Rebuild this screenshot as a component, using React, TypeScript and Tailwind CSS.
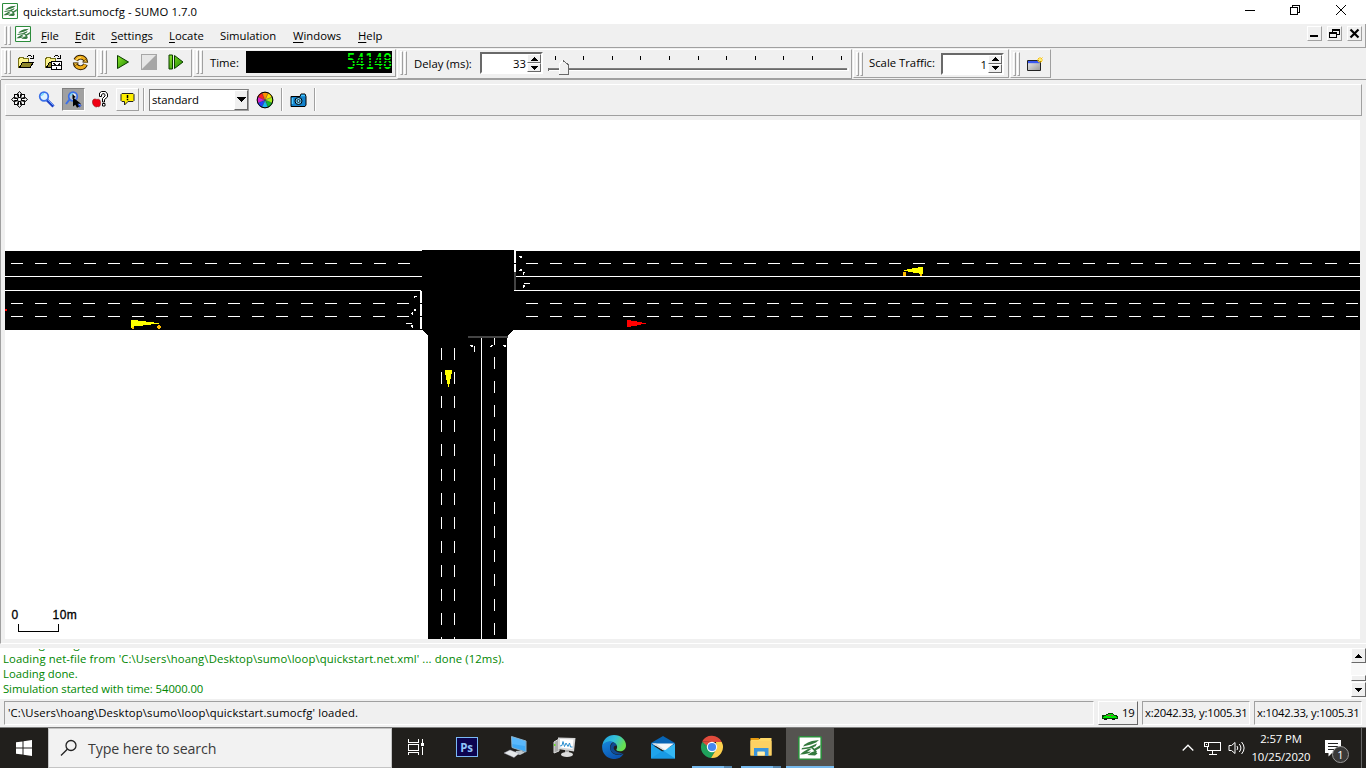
import React from "react";

type Kids = { children?: React.ReactNode; className?: string };

const raised = "border border-t-white border-l-white border-r-[#a0a0a0] border-b-[#a0a0a0]";
const sunken = "border border-t-[#a0a0a0] border-l-[#a0a0a0] border-r-white border-b-white";
const well = "border-2 border-t-[#696969] border-l-[#696969] border-r-white border-b-white bg-white";

function Svg({ w, h, children, className = "", crisp = false }: Kids & { w: number; h: number; crisp?: boolean }) {
  return (
    <svg width={w} height={h} viewBox={`0 0 ${w} ${h}`} fill="none" shapeRendering={crisp ? "crispEdges" : "auto"} className={`shrink-0 ${className}`}>
      {children}
    </svg>
  );
}

function SumoLogo({ size }: { size: number }) {
  return (
    <svg width={size} height={size} viewBox="0 0 24 24" className="shrink-0">
      <rect x="0.8" y="0.8" width="22.4" height="22.4" rx="1" fill="#fff" stroke="#2c8c3c" strokeWidth="1.6" />
      <g fill="#34793e">
        <path d="M10 6.500l4-1.500 7-1-3 2.500-5 2-8 2 1.500-2z" />
        <path d="M4 12l7-1 8-3.500-1.500 2.800-6 2.200-8 1z" />
        <path d="M16 13l6.500-4-.5 3-5.500 3z" />
        <path d="M2 18.500l3-2.500 5-3 4-.5-5 3.500 4-.5-2 1.700-5 1z" />
        <path d="M9.500 19l3.500-2.500 4-1.500 2.500 2.500L17 19.500z" />
        <path d="M12.500 11l1.500-.8 5 5.300-1.500 1z" />
      </g>
    </svg>
  );
}

function Grip({ className = "h-[24px]" }: { className?: string }) {
  return (
    <div className={`flex shrink-0 gap-[1px] ${className}`}>
      <i className="w-[3px] border border-t-white border-l-white border-r-[#a0a0a0] border-b-[#a0a0a0]" />
      <i className="w-[3px] border border-t-white border-l-white border-r-[#a0a0a0] border-b-[#a0a0a0]" />
    </div>
  );
}

function Arrow({ up = false }: { up?: boolean }) {
  return (
    <Svg w={7} h={4} crisp>
      <path fill="#000" d={up ? "M3 0h1v1h1v1h1v1h1v1H0V3h1V2h1V1h1z" : "M0 0h7v1H6v1H5v1H4v1H3V3H2V2H1V1H0z"} />
    </Svg>
  );
}

function SpinButtons() {
  return (
    <div className="flex w-[14px] flex-col">
      {[true, false].map((up) => (
        <div key={String(up)} className="flex flex-1 items-center justify-center border border-t-white border-l-white border-r-[#696969] border-b-[#696969] bg-[#f0f0f0]">
          <Arrow up={up} />
        </div>
      ))}
    </div>
  );
}

function Folder({ config = false }: { config?: boolean }) {
  return (
    <Svg w={17} h={16} crisp>
      <path d="M0.500 13.500V4.500h1v-1h4v1h5v3" fill="#fff68a" stroke="#77711a" />
      <path d="M1 13V5h9v3H4z" fill="#fbf38b" />
      <path d="M1.500 13.500l3-5h11l-3.500 5z" fill="#8d8528" stroke="#000" />
      <path d="M9 2.500h1M10 1.500h3M13 2.500h1M15.500 1v4M12 4.500h3" stroke="#000" />
      {config && (
        <>
          <rect x="6.500" y="7.500" width="10" height="8" fill="#fff" stroke="#000" />
          <path d="M7 11.500h3M13 11.500h3M11.500 13v2M8 9h1v1h1v1h3v-1h1V9h1" stroke="#111" />
        </>
      )}
    </Svg>
  );
}

function Reload() {
  return (
    <Svg w={17} h={17}>
      <circle cx="8.500" cy="8.500" r="5.300" stroke="#2b1a00" strokeWidth="4.800" strokeDasharray="14 2.650" strokeDashoffset="-2" />
      <circle cx="8.500" cy="8.500" r="5.300" stroke="#efae1b" strokeWidth="3" strokeDasharray="13.500 3.150" strokeDashoffset="-2.300" />
      <path d="M10.500 8h5.500L13.500 5.500zM6.500 9H1l2.500 2.500z" fill="#f7c53a" stroke="#2b1a00" strokeWidth=".6" />
      <path d="M4 6.500a5 5 0 0 1 5-3" stroke="#ffe173" />
    </Svg>
  );
}

const Green = () => (
  <defs>
    <linearGradient id="go" x1="0" y1="0" x2="1" y2="1">
      <stop offset="0" stopColor="#8ee62c" />
      <stop offset="1" stopColor="#1d8a00" />
    </linearGradient>
  </defs>
);

function Move() {
  return (
    <Svg w={17} h={17}>
      <g fill="#fff" stroke="#000">
        {[45, 135, 225, 315].map((a) => (
          <path key={a} transform={`rotate(${a} 8.500 8.500)`} d="M8.500 1.500L10.500 3.500 9 6.500H8L6.500 3.500z" />
        ))}
        {[0, 90, 180, 270].map((a) => (
          <path key={a} transform={`rotate(${a} 8.500 8.500)`} d="M8.500 .5L11 3.300H9.500V6.500h-2V3.300H6z" />
        ))}
      </g>
      <rect x="7.500" y="7.500" width="2" height="2" fill="#fff" />
    </Svg>
  );
}

function Lens({ picked = false }: { picked?: boolean }) {
  return (
    <Svg w={17} h={17}>
      <path d="M9 9l6.500 6.500" stroke="#1c3fc4" strokeWidth="3" />
      <path d="M9.500 8.500l6 6" stroke="#6ba4ff" />
      {picked && <path d="M4.500 8.500L1 13" stroke="#3a6fe8" strokeWidth="2" />}
      <circle cx={picked ? 8 : 6} cy="5.500" r="4.300" fill={picked ? "#b8c2d4" : "#dff2ff"} stroke="#3a6fe8" strokeWidth="1.700" />
      <path d={picked ? "M5.500 5a3 3 0 0 1 2.500-2.500" : "M3.500 5a3 3 0 0 1 2.500-2.500"} stroke="#65d8ff" strokeWidth="1.300" />
      {picked && (
        <>
          <path d="M7.500 3v5l3-2z" fill="#000" /><path d="M8 2l3 2-1 1z" fill="#fff" />
          <path d="M8 6.500v9l2.300-1.800 1.700 3 2-1-1.600-3H16z" fill="#000" />
        </>
      )}
    </Svg>
  );
}

function Scene() {
  const bits: number[][] = [
    [414, 296, 3, 1], [414, 297, 1, 1], [414, 309, 2, 2], [411, 313, 2, 1], [412, 312, 1, 3], [406, 323, 6, 1], [411, 325, 2, 2], [412, 327, 1, 1],
    [519, 256, 3, 1], [520, 257, 2, 1], [519, 270, 2, 1], [520, 269, 2, 2], [523, 272, 2, 1], [523, 273, 1, 2], [524, 283, 6, 1], [523, 285, 2, 2], [523, 287, 1, 1],
    [470, 345, 3, 1], [471, 346, 2, 1], [474, 346, 1, 6], [491, 345, 2, 1], [490, 346, 2, 1], [504, 345, 2, 1], [503, 345, 1, 1], [504, 346, 2, 1],
  ];
  return (
    <svg width="1355" height="519" viewBox="5 120 1355 519" shapeRendering="crispEdges" className="block">
      <path d="M5 251H422V250H514V251H1360V330H513L507 336V639H428V336L422 330H5z" fill="#000" />
      <g stroke="#fff" fill="none">
        <path d="M5 276.500H422M5 290.500H421M516 276.500H1360M514 290.500H1360M481.500 338V639" />
        <path d="M11 263.500H412" strokeDasharray="12 12.190" />
        <path d="M11 303.500H412M11 316.500H412" strokeDasharray="12 12.130" />
        <path d="M526 263.500H1360" strokeDasharray="12 12.200" />
        <path d="M526 303.500H1360M526 316.500H1360" strokeDasharray="12 12.130" />
        <path d="M441.500 348V639M454.500 348V639" strokeDasharray="12 12.100" />
        <path d="M494.500 357V639" strokeDasharray="12 12.150" />
        <path d="M494.500 336V345" />
      </g>
      <path d="M420 291h2v12h-2zM420 304h2v12h-2zM420 317h2v12h-2zM514 250h2v13h-2zM514 264h2v8h-2z" fill="#fff" />
      <path d="M514 272h2v18h-2zM468 336h40v2h-40z" fill="#444" />
      <g fill="#fff">{bits.map(([x, y, w, h], i) => <rect key={i} x={x} y={y} width={w} height={h} />)}</g>
      <path d="M131 320h7v1h8v1h8v1h5v1h-8v1h-8v1h-9v2h-3z" fill="#ff0" />
      <path d="M132 327h2v2h-2zM157 326h4v2h-4zM158 325h2v4h-2zM903 272h3v4h-3zM920 274h2v2h-2z" fill="#fb0" />
      <path d="M923 267h-5v1h-6v1h-5v1h-3v1h4v1h5v1h6v1h4z" fill="#ff0" />
      <path d="M627 320h4v1h6v1h5v1h4v1h-5v1h-4v1h-6v1h-4z" fill="#f00" />
      <path d="M445 370h7v4h-1v5h-1v5h-1v3h-1v-3h-1v-4h-1v-5h-1z" fill="#ff0" />
      <rect x="5" y="309" width="2" height="2" fill="#f00" />
      <path d="M18.500 624V631.500H58.500V624" stroke="#000" fill="none" />
      <g fontFamily="Liberation Sans, sans-serif" fontSize="12" fill="#000" stroke="#000" strokeWidth=".3" letterSpacing=".5">
        <text x="11.500" y="619">0</text>
        <text x="52.500" y="619">10m</text>
      </g>
    </svg>
  );
}

const menus: [string, string, string][] = [
  ["F", "ile", "w-[34px]"],
  ["E", "dit", "w-[36px]"],
  ["S", "ettings", "w-[58px]"],
  ["L", "ocate", "w-[51px]"],
  ["", "Simulation", "w-[73px]"],
  ["W", "indows", "w-[65px]"],
  ["H", "elp", "w-[40px]"],
];

function TitleBar() {
  return (
    <div className="flex h-[24px] items-center bg-white pb-[2px] pl-[2px]">
      <SumoLogo size={16} />
      <span className="ml-[5px] text-[11.3px] tracking-[0.09px]">quickstart.sumocfg - SUMO 1.7.0</span>
      <div className="ml-auto flex w-[121px] items-center pb-[2px]">
        <Svg w={10} h={10} crisp><path d="M0 5.500h10" stroke="#000" /></Svg>
        <Svg w={10} h={10} crisp className="ml-[35px]"><path d="M.5 2.500h7v7h-7zM2.500 2V.5h7v7H8" stroke="#000" /></Svg>
        <Svg w={10} h={10} className="ml-[36px]"><path d="M0 0l10 10M10 0L0 10" stroke="#000" /></Svg>
      </div>
    </div>
  );
}

function MenuBar() {
  return (
    <div className="ml-[1px] flex h-[24px] w-[1365px] border-b border-b-[#a0a0a0] border-r border-r-[#a0a0a0] pl-[3px]">
      <Grip className="mt-[2px] h-[19px]" />
      <div className="mt-[2px] ml-[4px]"><SumoLogo size={16} /></div>
      <div className="ml-[10px] flex pt-[4px]">
        {menus.map(([key, rest, width]) => (
          <span key={rest} className={`${width} leading-[15px]`}>
            <u className="underline-offset-2">{key}</u>{rest}
          </span>
        ))}
      </div>
      <div className="mt-[2px] mr-[3px] ml-auto flex gap-[5px]">
        <div className={`size-[15px] ${raised}`}><Svg w={13} h={13} crisp><path d="M2 8h8v2H2z" fill="#000" /></Svg></div>
        <div className={`size-[15px] ${raised}`}><Svg w={13} h={13} crisp><path d="M4.500 5V2.500h7v5H9M4 3h8M1.500 5.500h7v5h-7zM1 6.500h8" stroke="#000" /></Svg></div>
        <div className={`size-[15px] ${raised}`}><Svg w={13} h={13}><path d="M2.500 2.500l8 8M10.500 2.500l-8 8" stroke="#000" strokeWidth="2.200" /></Svg></div>
      </div>
    </div>
  );
}

function Toolbars() {
  const ticks = [0, 28, 57, 85, 114, 143, 171, 200, 228, 257, 286];
  return (
    <div className="ml-[1px] flex h-[32px] items-start border-b border-b-[#a0a0a0] pt-[1px]">
      <div className={`flex h-[28px] w-[95px] items-center pb-[2px] pl-[2px] ${raised}`}>
        <Grip />
        <span className="ml-[7px]"><Folder /></span>
        <span className="ml-[10px]"><Folder config /></span>
        <span className="ml-[10px]"><Reload /></span>
      </div>
      <div className={`ml-[1px] flex h-[28px] w-[95px] items-center pb-[2px] pl-[2px] ${raised}`}>
        <Grip />
        <Svg w={14} h={16} className="ml-[9px]"><Green /><path d="M1.500 1.500V14.500L12.500 8z" fill="url(#go)" stroke="#0b3d00" /></Svg>
        <Svg w={16} h={16} className="ml-[11px]"><rect width="16" height="16" fill="#a6a6a6" /><path d="M1 15V1H15z" fill="#e6e6e6" /></Svg>
        <Svg w={16} h={16} className="ml-[11px]"><path d="M1 1h3.500v14H1zM6.500 1.500v13L15 8z" fill="url(#go)" stroke="#0b3d00" /></Svg>
      </div>
      <div className={`ml-[1px] flex h-[28px] w-[203px] items-center pb-[2px] pl-[2px] ${raised}`}>
        <Grip />
        <span className="ml-[7px] w-[36px]">Time:</span>
        <div className="relative flex h-[22px] w-[146px] items-center justify-end bg-black">
          <span className="origin-center scale-y-[1.4] font-['DejaVu_Sans_Mono',monospace] text-[15px] leading-[15px] text-[#0f0]">54148</span>
          <i className="absolute top-[6px] right-0 h-px w-[48px] bg-black" />
          <i className="absolute top-[9px] right-0 h-px w-[48px] bg-black" />
          <i className="absolute top-[12px] right-0 h-px w-[48px] bg-black" />
          <i className="absolute top-[15px] right-0 h-px w-[48px] bg-black" />
        </div>
      </div>
      <div className={`ml-[1px] flex h-[30px] w-[455px] items-center pb-[2px] pl-[2px] ${raised}`}>
        <Grip />
        <span className="ml-[7px] w-[66px]">Delay (ms):</span>
        <div className={`flex h-[22px] w-[63px] ${well}`}>
          <span className="flex-1 pr-[1px] text-right leading-[19px]">33</span>
          <SpinButtons />
        </div>
        <svg width="302" height="28" viewBox="0 0 302 28" shapeRendering="crispEdges" className="ml-[4px]">
          {ticks.map((x) => <path key={x} d={`M${x + 8.500} 7v4`} stroke="#000" />)}
          <path d="M1 19h299" stroke="#808080" /><path d="M1 20h299" stroke="#696969" /><path d="M1 21.500h300v-3" stroke="#fff" fill="none" />
          <path d="M1.500 19v3" stroke="#696969" />
          <path d="M12 15l4-4 5 4v10h-9z" fill="#f0f0f0" />
          <path d="M12.500 25V15l4-4" stroke="#fff" fill="none" />
          <path d="M16 11.500l5 4V25.500h-9" stroke="#696969" fill="none" />
        </svg>
      </div>
      <div className={`ml-[1px] flex h-[29px] w-[156px] items-center pl-[2px] ${raised}`}>
        <Grip />
        <span className="ml-[6px] w-[72px] pb-[2px] whitespace-nowrap">Scale Traffic:</span>
        <div className={`flex h-[22px] w-[63px] ${well}`}>
          <span className="flex-1 pr-[1px] text-right leading-[20px]">1</span>
          <SpinButtons />
        </div>
      </div>
      <div className={`ml-[1px] flex h-[29px] w-[41px] items-center pl-[2px] ${raised}`}>
        <Grip />
        <Svg w={17} h={16} className="ml-[7px]">
          <defs><linearGradient id="win" x1="0" y1="0" x2="1" y2="1"><stop stopColor="#eee" /><stop offset="1" stopColor="#999" /></linearGradient></defs>
          <path d="M.5 4.500h13v10H.5z" fill="url(#win)" stroke="#222" />
          <path d="M1 5h12v2.200H1z" fill="#3b59f0" />
          <path d="M13 1v6M10 4h6M11 2l4 4M15.500 1.500L11 6" stroke="#ffc400" />
          <circle cx="13" cy="4" r="1.300" fill="#fff36b" />
        </Svg>
      </div>
    </div>
  );
}

function ViewToolbar() {
  return (
    <div className={`ml-[4px] flex h-[32px] w-[1357px] items-center pb-[1px] ${raised}`}>
      <span className="ml-[5px]"><Move /></span>
      <span className="ml-[10px]"><Lens /></span>
      <div className="ml-[7px] flex size-[23px] items-center justify-center border border-t-[#808080] border-l-[#808080] border-r-white border-b-white bg-[#a0a0a0]"><Lens picked /></div>
      <Svg w={17} h={17} className="ml-[7px]">
        <path d="M5 8.500c-3-1.500-5 .3-4.500 3.300S4 17 5.500 15.500c2 1 3-1 3-3.500S7.500 7.500 5 8.500z" fill="#f00013" stroke="#700" strokeWidth=".5" />
        <path d="M7.500 5.500V2l2-1.500h4L15.500 3v3l-3 2.500V11h-2V7.500L13 5V3.500l-1-.8h-1.500L9.500 4v1.500zM10.500 12.500h2.500V15h-2.500z" fill="#fff" stroke="#000" />
      </Svg>
      <div className={`ml-[7px] flex size-[23px] items-center justify-center ${raised}`}>
        <Svg w={15} h={15}>
          <path d="M2 1.500h11l1 1v6l-1 1H8L4.500 13V9.500H2l-1-1v-6z" fill="#ffef00" stroke="#222" />
          <path d="M7.500 3v3.300M7.500 7v1.300" stroke="#000" strokeWidth="1.500" />
        </Svg>
      </div>
      <i className="ml-[4px] h-[23px] w-[2px] border-l border-l-[#a0a0a0] bg-white" />
      <div className="ml-[4px] flex h-[22px] w-[100px] border border-t-[#808080] border-l-[#808080] border-r-[#a0a0a0] border-b-[#a0a0a0] bg-white">
        <span className="flex-1 pl-[2px] leading-[20px] tracking-[-0.05px]">standard</span>
        <div className="flex w-[14px] items-center justify-center border border-t-white border-l-white border-r-[#696969] border-b-[#696969] bg-[#f0f0f0]"><Svg w={9} h={5} crisp><path d="M0 0h9v1H8v1H7v1H6v1H5v1H4V4H3V3H2V2H1V1H0z" fill="#000" /></Svg></div>
      </div>
      <Svg w={18} h={18} className="ml-[7px]">
        {["#ff9000", "#ff2020", "#e020d0", "#2040ff", "#18b8f0", "#10b830", "#a8f020", "#ffe000"].reverse().map((c, i, all) => {
          const step = (Math.PI * 2) / all.length;
          const a = i * step + 1.2;
          return <path key={c} fill={c} stroke="#222" strokeWidth=".3" d={`M9 9L${9 + 8 * Math.sin(a)} ${9 - 8 * Math.cos(a)}A8 8 0 0 0 ${9 + 8 * Math.sin(a - step)} ${9 - 8 * Math.cos(a - step)}z`} />;
        })}
        <circle cx="9" cy="9" r="7.800" stroke="#000" />
      </Svg>
      <i className="ml-[7px] h-[23px] w-[2px] border-l border-l-[#a0a0a0] bg-white" />
      <Svg w={17} h={16} className="ml-[7px]">
        <path d="M1 4.500h9l1-2.500h4l1 2.500V13l-1 1.500H1z" fill="#1382cc" stroke="#000" />
        <path d="M11 3.500h4" stroke="#46c5ff" strokeWidth="1.500" /><path d="M2.500 6v6" stroke="#51c9ff" strokeWidth="1.500" />
        <circle cx="8.500" cy="9" r="3.500" fill="#73cffa" stroke="#000" /><circle cx="8.500" cy="9" r="1.500" fill="#8de0ff" stroke="#000" strokeWidth=".8" />
      </Svg>
      <i className="ml-[7px] h-[23px] w-[2px] border-l border-l-[#a0a0a0] bg-white" />
    </div>
  );
}

function Messages() {
  return (
    <div className="flex h-[51px] bg-white">
      <div className="flex flex-1 flex-col overflow-hidden pl-[3px] text-[#008600]">
        <div className="relative mt-[1px] h-[2px] shrink-0 overflow-hidden"><span className="absolute bottom-0 left-0 leading-[15px]">Loading configuration</span></div>
        <div className="leading-[15px] tracking-[0.12px]">Loading net-file from 'C:\Users\hoang\Desktop\sumo\loop\quickstart.net.xml' ... done (12ms).</div>
        <div className="leading-[15px]">Loading done.</div>
        <div className="leading-[15px] tracking-[-0.07px]">Simulation started with time: 54000.00</div>
      </div>
      <div className="flex w-[15px] flex-col bg-[#f8f8f8]">
        <div className="flex h-[15px] items-center justify-center border border-t-white border-l-white border-r-[#696969] border-b-[#696969] bg-[#f0f0f0]"><Arrow up /></div>
        <div className="mt-[12px] h-[6px] border border-t-white border-l-white border-r-[#696969] border-b-[#696969] bg-[#f0f0f0]" />
        <div className="mt-[1px] flex h-[15px] items-center justify-center border border-t-white border-l-white border-r-[#696969] border-b-[#696969] bg-[#f0f0f0]"><Arrow /></div>
      </div>
    </div>
  );
}

function StatusBar() {
  return (
    <div className="flex h-[29px] border-b border-b-[#808080] pt-[2px] pl-[4px] whitespace-nowrap">
      <div className={`h-[24px] w-[1090px] pl-[3px] leading-[22px] tracking-[0.14px] ${sunken}`}>'C:\Users\hoang\Desktop\sumo\loop\quickstart.sumocfg' loaded.</div>
      <div className="ml-[4px] flex h-[24px] w-[40px] border border-t-white border-l-white border-r-[#696969] border-b-[#696969] pl-[2px] leading-[22px] tracking-[-0.2px]">
        <Svg w={17} h={9} crisp className="mt-[10px] mr-[4px]">
          <path d="M1.500 3.500h3l1-1h1l1-1h4l2 2h2v1h1v2h-15v-2h1z" fill="#00e800" stroke="#064006" />
          <path d="M6 3.500h3M10 3.500h2" stroke="#a04060" />
          <path d="M3 7.500h3M11 7.500h3" stroke="#111" />
        </Svg>
        19
      </div>
      <div className={`ml-[4px] h-[24px] w-[108px] pl-[2px] leading-[22px] tracking-[-0.22px] ${sunken}`}>x:2042.33, y:1005.31</div>
      <div className={`ml-[4px] h-[24px] w-[108px] pl-[2px] leading-[22px] tracking-[-0.22px] ${sunken}`}>x:1042.33, y:1005.31</div>
    </div>
  );
}

function Slot({ children, className = "w-[49px]", open = false }: Kids & { open?: boolean }) {
  return (
    <div className={`flex h-[40px] shrink-0 flex-col items-center ${className}`}>
      <div className="flex h-[38px] items-center justify-center">{children}</div>
      {open && <div className="flex h-[2px] w-[40px]"><i className="w-[32px] bg-[#76b9ed]" /><i className="flex-1 bg-[#5586ad]" /></div>}
    </div>
  );
}

function Taskbar() {
  return (
    <div className="flex h-[40px] bg-[#211f1c] text-white">
      <div className="flex w-[48px] items-center justify-center">
        <Svg w={16} h={16}><path d="M0 2.300L6.500 1.400V7.500H0zM7.500 1.200L16 0v7.500H7.500zM0 8.500h6.500v6.100L0 13.700zM7.500 8.500H16V16l-8.500-1.200z" fill="#fff" /></Svg>
      </div>
      <div className="flex w-[344px] items-center border border-[#c4c4c4] bg-[#f2f2f2] pl-[11px]">
        <Svg w={18} h={18}><circle cx="11" cy="6.500" r="5" stroke="#222" strokeWidth="1.300" /><path d="M7.300 10.200L1 16.500" stroke="#222" strokeWidth="1.300" /></Svg>
        <span className="ml-[10px] text-[14.2px] tracking-[-0.12px] text-[#3b3b3b]">Type here to search</span>
      </div>
      <Slot className="w-[50px] pr-[2px]">
        <Svg w={18} h={16} crisp><path d="M1.500 0v3.500h10V0M1.500 5.500h10v6h-10zM1.500 16v-2.500h10V16M15.500 0v4M15.500 8v8" stroke="#fff" /><path d="M14 4h3v3h-3z" fill="#fff" /></Svg>
      </Slot>
      <Slot>
        <div className="flex h-[20px] w-[22px] items-center justify-center border border-[#7bb9f5] bg-[#0c0450] font-['Open_Sans',sans-serif] text-[11.5px] font-bold tracking-[-0.3px] text-[#8fc4f8]">Ps</div>
      </Slot>
      <Slot>
        <Svg w={24} h={24}>
          <path d="M7.500 1.500L22 6v11L8 12.500z" fill="#3fa9f5" stroke="#8fb2c9" /><path d="M8 2l13 4v5L8 9z" fill="#6cc3ff" opacity=".6" />
          <path d="M12 16l5-.5 4 2-5 2.500-5-1.500z" fill="#bfc7cc" /><path d="M0 18l6-3 9 3.500-5 4z" fill="#e5e8ea" stroke="#aab" strokeWidth=".4" />
        </Svg>
      </Slot>
      <Slot>
        <Svg w={24} h={22}>
          <path d="M1 6l5-3v12l-5 2z" fill="#aaa" stroke="#ddd" /><rect x="1" y="8" width="1.500" height="2" fill="#6d2" />
          <path d="M5 1.500L22.500 2 21 15.500 5 13z" fill="#d6d6d6" /><path d="M7 3l13.500.5L19.500 13 7 11.500z" fill="#fff" />
          <path d="M7 10l2-.5 1-4 1.500 5L13 7l2 3.500L16.500 7l1 4h2" stroke="#2b8fd0" />
          <path d="M12 14h4v3h-4z" fill="#aaa" /><ellipse cx="14" cy="18.500" rx="6" ry="2.500" fill="#ddd" />
        </Svg>
      </Slot>
      <Slot>
        <Svg w={24} h={24}>
          <defs>
            <linearGradient id="e1" x1="0" y1="0" x2="1" y2=".4"><stop stopColor="#1b9de2" /><stop offset=".55" stopColor="#35c1d8" /><stop offset="1" stopColor="#67e04f" /></linearGradient>
            <linearGradient id="e2" x1="0" y1="0" x2=".5" y2="1"><stop stopColor="#1687dc" /><stop offset="1" stopColor="#0c55b0" /></linearGradient>
          </defs>
          <path d="M.3 11C.8 4.500 6 0 12 0c7 0 12 5 12 10.300 0 4-3 6-6 6-2.500 0-4-1-3.600-2 1-1.200 1-3 0-4.500C12 6 5 5 .3 11z" fill="url(#e1)" />
          <path d="M.2 10.500C3 6.500 8 5.500 11.500 7c-3 1-4 4.500-3 8 1.200 4 6 6.500 13.200 3.700C19 23 15 24.300 11 24 4.500 23.500-.6 18 .2 10.500z" fill="url(#e2)" />
          <path d="M8.600 15c-.7-3 .2-6 3-7.800 1.500.7 3 2 3.300 4-1-.8-3-.3-3.200 1.500-.2 2.500 3.300 5.200 9.300 5.500-6 2.800-11 .5-12.400-3.200z" fill="#104a91" />
        </Svg>
      </Slot>
      <Slot>
        <Svg w={24} h={23}>
          <path d="M0 7L12 0l12 7v3H0z" fill="#0764b4" />
          <path d="M0 8l12 8L24 8v14.500H0z" fill="#1fa4ec" /><path d="M12 14.500L24 8v14.500z" fill="#35b8f4" /><path d="M0 22.500L12 14.500l12 8z" fill="#1696e2" opacity=".7" /><path d="M1 7.500h22l-8.500 6.500H12z" fill="#f4f7f9" /><path d="M1 7.500h4l9 6.500H12z" fill="#d5dde3" />
        </Svg>
      </Slot>
      <Slot open>
        <Svg w={24} h={24}>
          <path d="M2.100 6.500A11 11 0 0 1 21.700 7H12z" fill="#e14b3c" /><path d="M2.300 6.700A11 11 0 0 0 11 23l5-8-8.500 0z" fill="#1fa15c" /><path d="M2.300 6.500L8 15l4-8z" fill="#e14b3c" /><path d="M2.300 6.700L7.200 15h5l-5-4z" fill="#1fa15c" />
          <path d="M21.700 7A11 11 0 0 1 11 23l5.500-9-.5-7z" fill="#fdd04d" />
          <circle cx="12" cy="12" r="5.200" fill="#fff" /><circle cx="12" cy="12" r="4.100" fill="#4688f1" />
        </Svg>
      </Slot>
      <Slot open>
        <Svg w={22} h={20}>
          <path d="M.5 1h8l2 2h-10z" fill="#e79c12" /><path d="M.5 3h8l2-2H21.500v17.500H.5z" fill="#ffd867" /><path d="M.5 4h21v14.500H.5z" fill="#fdd163" />
          <path d="M4 11h14.500v8H15v-4H7.500v4H4z" fill="#3b95dc" /><path d="M7.500 14.500h7v4h-7z" fill="#fff0b0" />
        </Svg>
      </Slot>
      <div className="ml-[1px] flex h-[40px] w-[48px] flex-col items-center border-b-2 border-b-[#76b9ed] bg-[#555350] pt-[8px]"><SumoLogo size={24} /></div>
      <div className="ml-auto flex items-center">
        <Svg w={12} h={8}><path d="M.7 6.500L6 1.200l5.300 5.300" stroke="#fff" strokeWidth="1.300" /></Svg>
        <Svg w={17} h={15} crisp className="ml-[10px]"><path d="M5 1.500h11.500v8H3.500V6M8.500 10v3M5 13.500h8M.5 1.500h4v4h-4zM2.500 3v1" stroke="#fff" /></Svg>
        <Svg w={18} h={16} className="ml-[7px]"><path d="M1 5.500h2.500L7 2.500v11L3.500 10.500H1z" stroke="#fff" /><path d="M9 6q1.600 2 0 4M11.300 4q3.200 4 0 8M13.600 2q5 6 0 12" stroke="#fff" /></Svg>
        <div className="ml-[5px] w-[60px] text-center text-[11.3px] leading-[18px] tracking-[-0.1px] whitespace-nowrap">2:57 PM<br />10/25/2020</div>
        <div className="relative ml-[13px] h-[26px] w-[37px]">
          <Svg w={18} h={17} className="mt-[5px]"><path d="M1 0h16v13H8l-3.500 3.500V13H1z" fill="#fff" /><path d="M4 3.500h10M4 6.500h10M4 9.500h6" stroke="#222" /></Svg>
          <span className="absolute top-[11px] left-[8px] flex size-[17px] items-center justify-center rounded-full border border-[#999] bg-[#3a3938] text-[11px]">1</span>
        </div>
        <i className="h-[40px] w-[5px] border-l border-l-[#666]" />
      </div>
    </div>
  );
}

export default function App() {
  return (
    <div className="h-[768px] w-[1366px] overflow-hidden bg-[#f0f0f0] font-['Open_Sans','Noto_Sans',sans-serif] text-[11.3px] leading-[15px] text-black">
      <TitleBar />
      <MenuBar />
      <Toolbars />
      <div className="h-[564px] border-b border-l border-b-white border-l-[#a0a0a0] pt-[4px]">
        <ViewToolbar />
        <div className="mt-[4px] ml-[4px] w-[1355px] bg-white"><Scene /></div>
      </div>
      <div className="h-[4px]" />
      <Messages />
      <StatusBar />
      <Taskbar />
    </div>
  );
}
